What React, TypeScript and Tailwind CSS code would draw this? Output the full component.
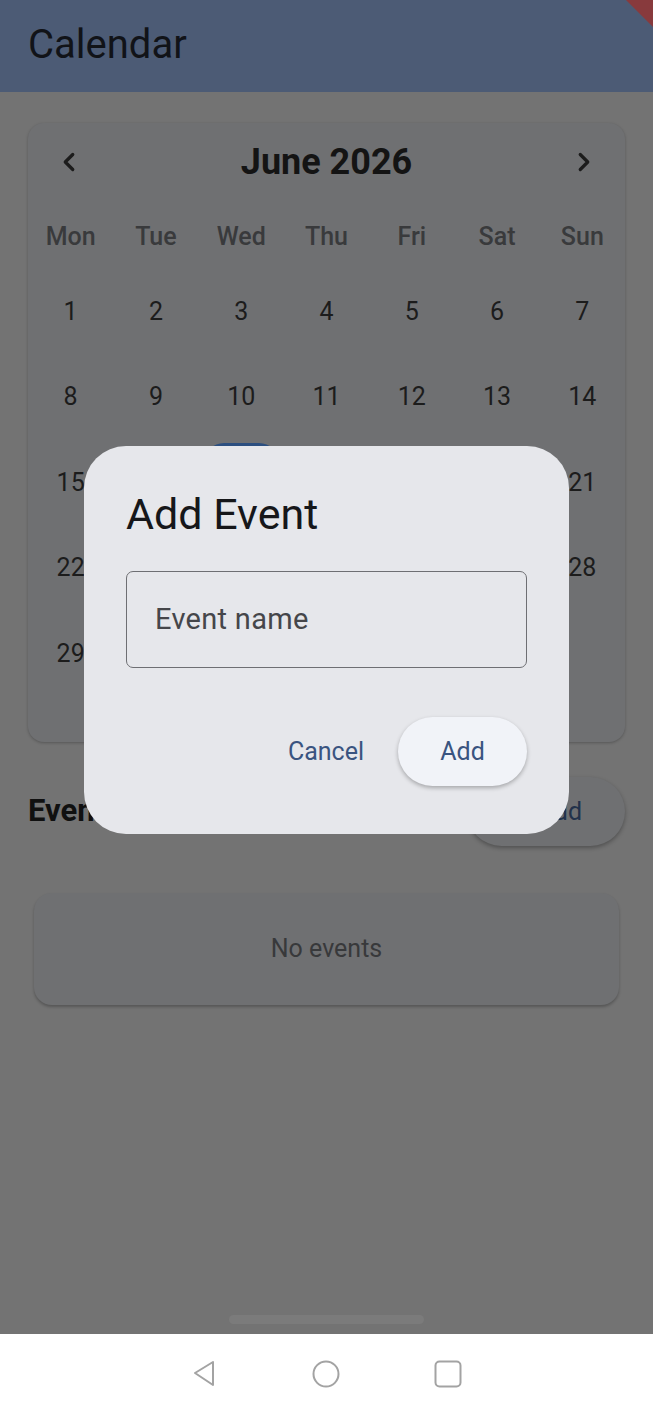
import { ChevronLeft, ChevronRight, Plus } from "lucide-react";

const weekdays = ["Mon", "Tue", "Wed", "Thu", "Fri", "Sat", "Sun"];
const days: (number | null)[] = [
  ...Array.from({ length: 30 }, (_, i) => i + 1),
  null, null, null, null, null,
];

const CalendarCard = () => {
  return (
    <div className="mx-[28px] mt-[31px] rounded-[16px] bg-[#6f7072] pt-[12px] pb-[46px] shadow-[0_1px_3px_rgba(0,0,0,0.25)]">
      <div className="flex h-[54px] items-center justify-between px-[26px]">
        <ChevronLeft size={30} strokeWidth={2.6} className="text-[#1c1c1c]" />
        <span className="text-[36px] font-bold text-[#141414]">June 2026</span>
        <ChevronRight size={30} strokeWidth={2.6} className="text-[#1c1c1c]" />
      </div>
      <div className="mt-[23px] grid h-[50px] grid-cols-7 items-center">
        {weekdays.map((d) => (
          <span key={d} className="text-center text-[25px] font-medium text-[#393a3c]">
            {d}
          </span>
        ))}
      </div>
      <div className="mt-[7px] grid grid-cols-7">
        {days.map((d, i) => (
          <div key={i} className="flex h-[85.4px] items-center justify-center">
            {d === 17 ? (
              <div className="flex h-[78px] w-[75px] items-center justify-center rounded-[20px] bg-[#2c4f80] text-[25px] text-white">
                {d}
              </div>
            ) : (
              d && <span className="text-[25px] text-[#1c1c1c]">{d}</span>
            )}
          </div>
        ))}
      </div>
    </div>
  );
};

const AddEventDialog = () => {
  return (
    <div className="absolute left-[84px] top-[446px] w-[485px] rounded-[42px] bg-[#e6e7eb] px-[42px] pt-[42px] pb-[48px]">
      <h2 className="text-[43px] leading-[52px] text-[#16171a]">Add Event</h2>
      <div className="mt-[31px] flex h-[97px] items-center rounded-[7px] border-[1.5px] border-[#6e6f73] px-[28px]">
        <span className="text-[29px] tracking-[0.3px] text-[#45464a]">Event name</span>
      </div>
      <div className="mt-[49px] flex items-center justify-end gap-[18px]">
        <button className="px-[16px] text-[25px] text-[#3a5480]">Cancel</button>
        <button className="flex h-[69px] w-[129px] items-center justify-center rounded-full bg-[#f1f3f8] text-[25px] text-[#3a5480] shadow-[0_2px_4px_rgba(0,0,0,0.28)]">
          Add
        </button>
      </div>
    </div>
  );
};

export default function App() {
  return (
    <div className="relative flex h-[1414px] w-full flex-col overflow-hidden font-['Roboto',sans-serif]">
      <div className="relative flex h-[1334px] flex-col bg-[#737373]">
        <header className="flex h-[92px] items-center bg-[#4c5b75] px-[28px] pb-[2px]">
          <h1 className="text-[40px] text-[#111318]">Calendar</h1>
        </header>
        <svg className="absolute right-0 top-0" width="27" height="27" viewBox="0 0 27 27">
          <polygon points="0,0 27,0 27,27" fill="#883a3d" />
        </svg>

        <CalendarCard />

        <div className="mx-[28px] mt-[35px] flex h-[69px] items-center justify-between">
          <span className="text-[31px] font-bold text-[#101010]">Events</span>
          <button className="flex h-[69px] w-[158px] items-center justify-end gap-[12px] rounded-full bg-[#6f7072] pr-[43px] text-[25px] text-[#22324b] shadow-[0_2px_4px_rgba(0,0,0,0.3)]">
            <Plus size={24} />
            Add
          </button>
        </div>

        <div className="mx-[34px] mt-[47px] flex h-[112px] items-center justify-center rounded-[18px] bg-[#6f7072] shadow-[0_2px_3px_rgba(0,0,0,0.25)]">
          <span className="text-[25px] text-[#38393b]">No events</span>
        </div>

        <div className="mt-auto mb-[10px] flex justify-center">
          <div className="h-[9px] w-[195px] rounded-full bg-[#7b7b7b]" />
        </div>

        <AddEventDialog />
      </div>

      <nav className="flex h-[80px] items-center justify-center gap-[94px] bg-white">
        <svg width="26" height="28" viewBox="0 0 26 28" fill="none" stroke="#a3a3a3" strokeWidth="2" strokeLinejoin="round">
          <path d="M21 2 L3 13 L21 25 Z" />
        </svg>
        <svg width="28" height="28" viewBox="0 0 28 28" fill="none" stroke="#a3a3a3" strokeWidth="2">
          <circle cx="14" cy="14" r="12.5" />
        </svg>
        <svg width="28" height="28" viewBox="0 0 28 28" fill="none" stroke="#a3a3a3" strokeWidth="2">
          <rect x="1.5" y="1.5" width="25" height="25" rx="4" />
        </svg>
      </nav>
    </div>
  );
}
